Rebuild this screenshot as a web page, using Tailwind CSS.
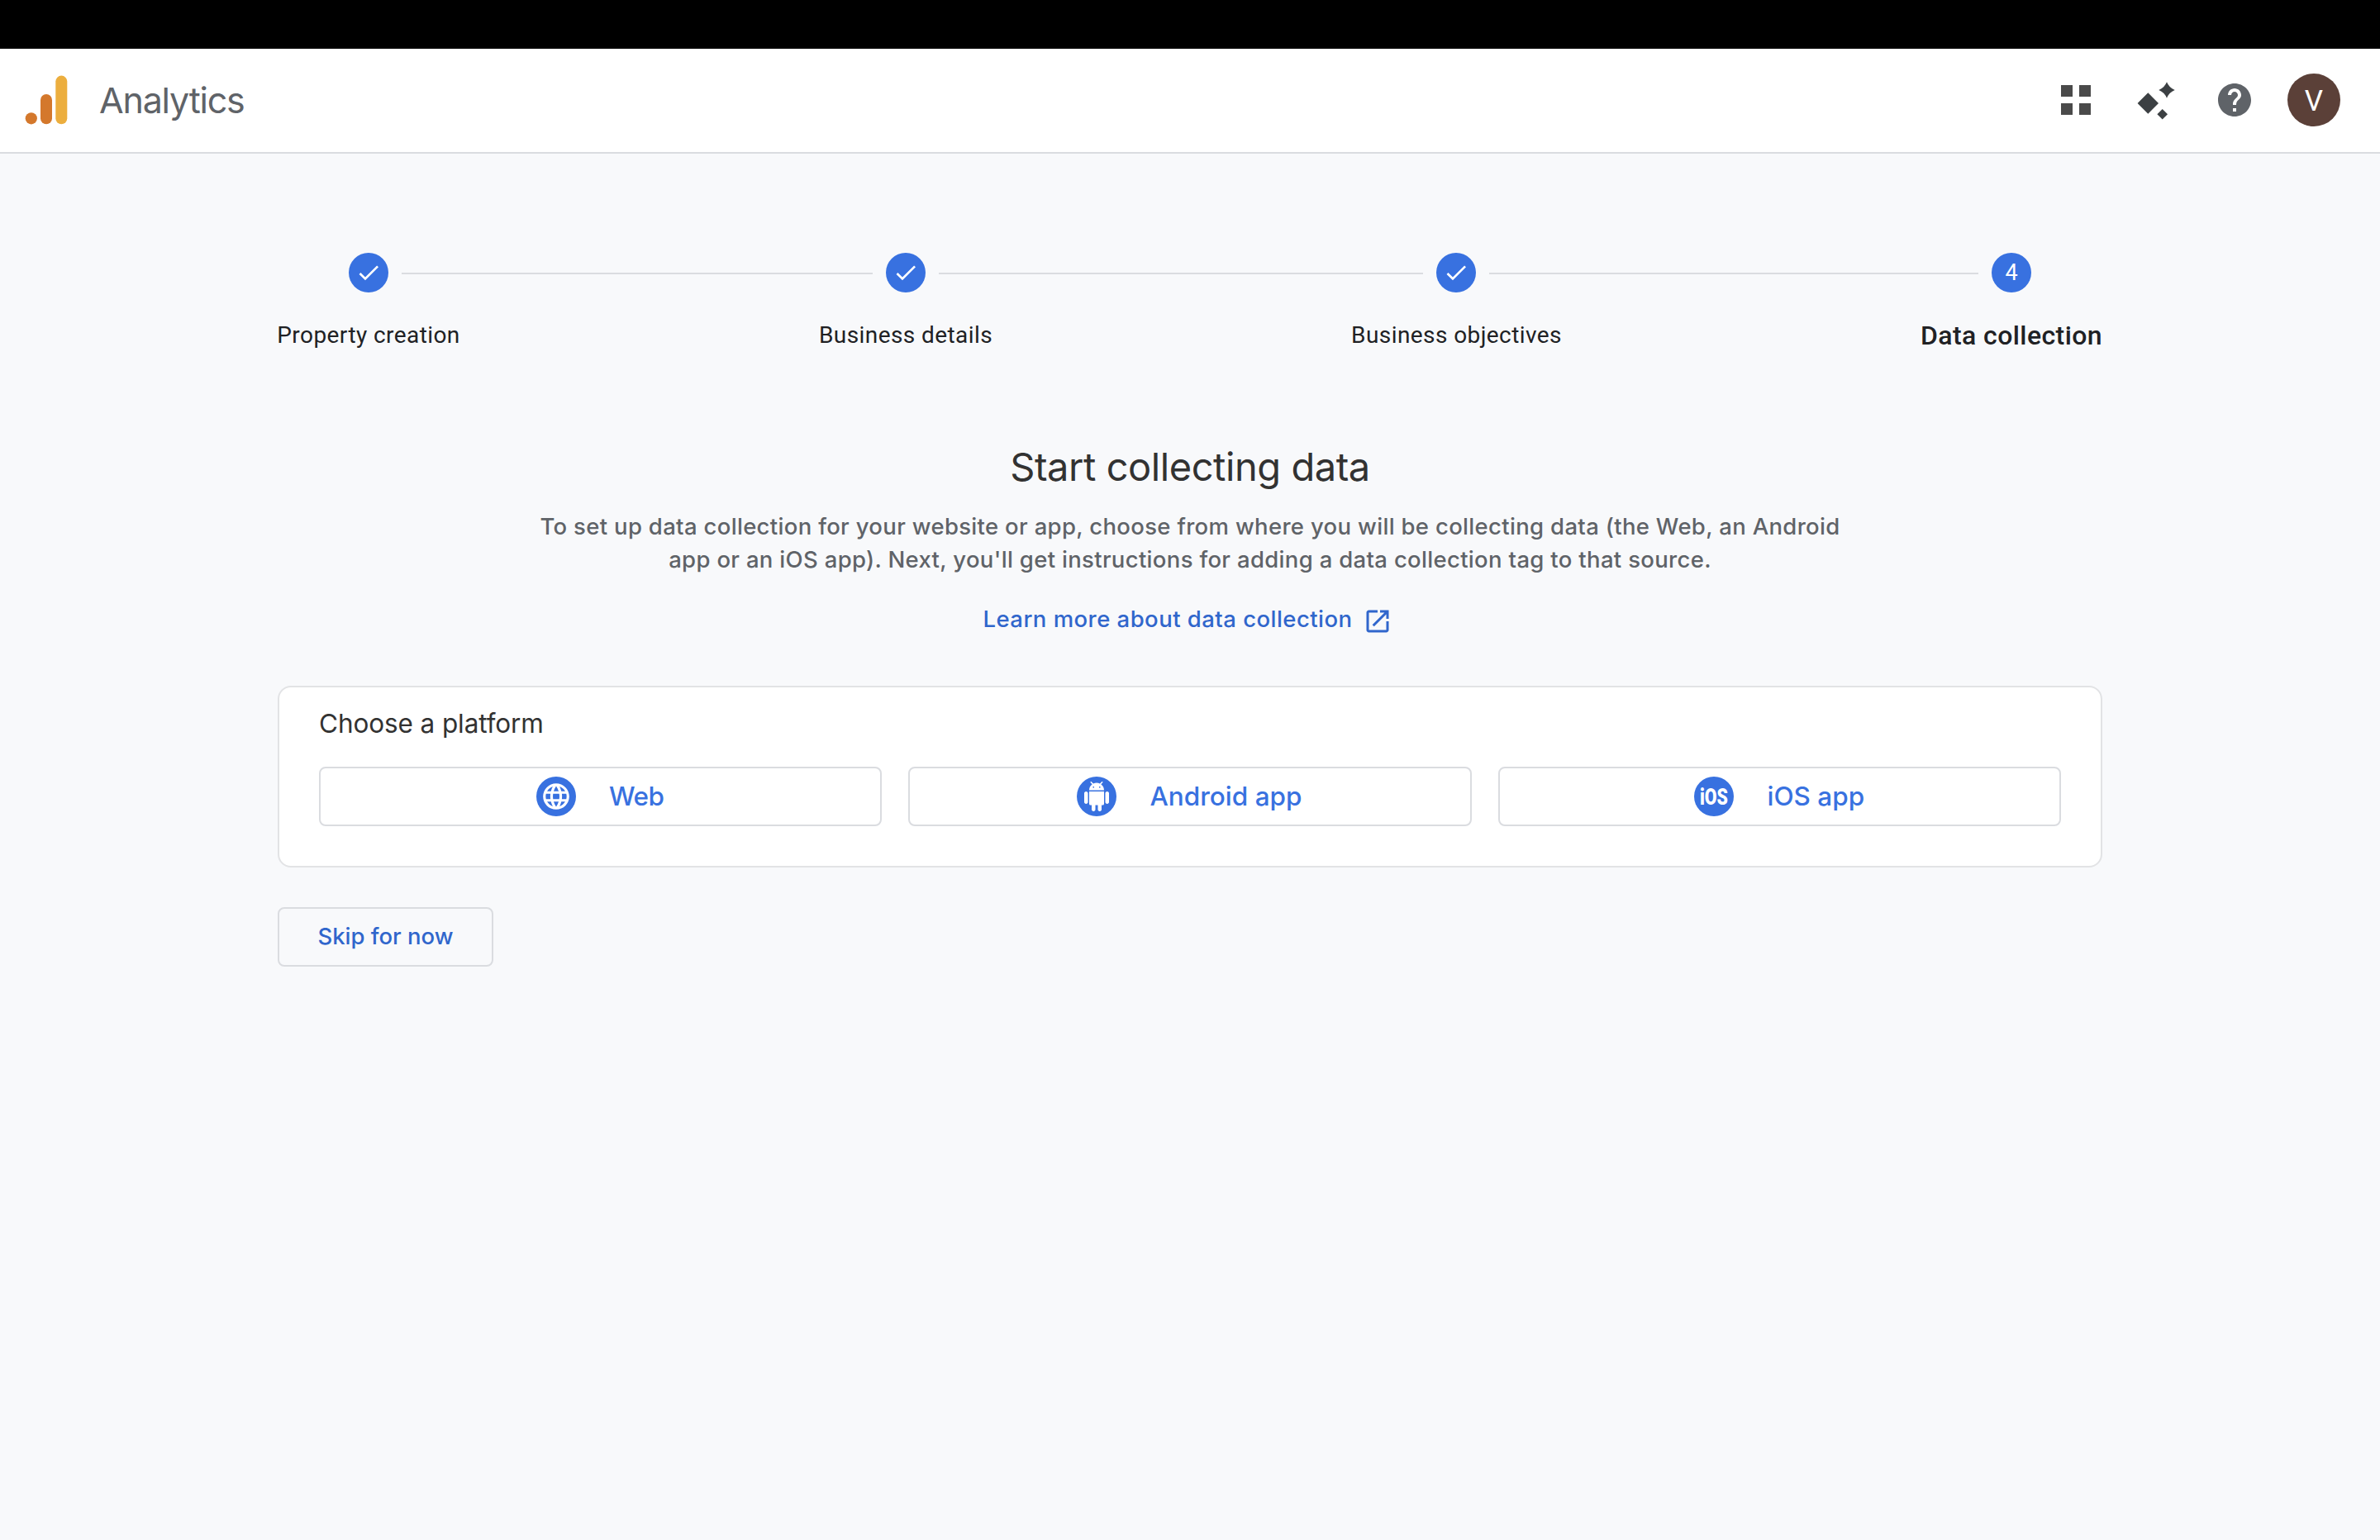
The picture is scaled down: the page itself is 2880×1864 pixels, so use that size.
<!DOCTYPE html>
<html lang="en">

<head>
  <meta charset="UTF-8">
  <meta name="viewport" content="width=device-width, initial-scale=1.0">
  <title>Analytics</title>
  <script src="https://cdn.jsdelivr.net/npm/@tailwindcss/browser@4"></script>
</head>

<body class="min-h-screen bg-[#f8f9fb] font-['Inter',sans-serif] text-[#323232]">

  <div class="h-[59px] bg-black"></div>

  <!-- Header -->
  <header class="h-[127px] pl-[30px] pr-14 pb-px flex items-center justify-between bg-white border-b-2 border-[#dadce0]">
    <div class="flex items-center">
      <svg class="w-[54px] h-[60px]" viewBox="0 0 54 60">
        <circle cx="7.8" cy="52.3" r="7.1" fill="#d4782c" />
        <rect x="19" y="23" width="14" height="36.3" rx="7" fill="#d4782c" />
        <rect x="37.3" y="0.6" width="14" height="58.7" rx="7" fill="#ecae3e" />
      </svg>
      <span class="ml-9 pt-px text-[43px] leading-none tracking-[-1.2px] text-[#5f6368]">Analytics</span>
    </div>

    <div class="flex items-center gap-12">
      <button>
        <svg class="block size-12" viewBox="0 0 48 48" fill="#4a4a4a">
          <path d="M6 6h14v14H6zM28 6h14v14H28zM6 28h14v14H6zM28 28h14v14H28z" />
        </svg>
      </button>
      <button>
        <svg class="block size-12" viewBox="0 0 48 48" fill="#3c4043">
          <path d="M15.3 15.3L28 28 15.3 40.7 2.6 28z" />
          <path d="M32.7 35l6.3 6.3-6.3 6.3-6.3-6.3z" />
          <path d="M38 2.3Q40.8 9.2 47.7 12 40.8 14.8 38 21.7 35.2 14.8 28.3 12 35.2 9.2 38 2.3z" />
        </svg>
      </button>
      <button>
        <svg class="block size-12" viewBox="0 0 24 24" fill="#5f6368">
          <path d="M12 2C6.48 2 2 6.48 2 12s4.48 10 10 10 10-4.48 10-10S17.52 2 12 2zm1 17h-2v-2h2v2zm2.07-7.75l-.9.92C13.45 12.9 13 13.5 13 15h-2v-.5c0-1.1.45-2.1 1.17-2.83l1.24-1.26c.37-.36.59-.86.59-1.41 0-1.1-.9-2-2-2s-2 .9-2 2H8c0-2.21 1.79-4 4-4s4 1.79 4 4c0 .88-.36 1.68-.93 2.25z" />
        </svg>
      </button>
      <button class="size-16 -ml-2 -mr-2 pt-0.5 rounded-full bg-[#5b4038] text-white font-['Roboto',sans-serif] text-[35px] leading-none">V</button>
    </div>
  </header>

  <main class="w-[2208px] mx-auto pt-[120px]">

    <!-- Stepper -->
    <div class="px-[86px] flex items-center gap-4 h-12">
      <span class="size-12 rounded-full bg-[#3871e0] flex items-center justify-center shrink-0">
        <svg class="size-8" viewBox="0 0 24 24" fill="#fff"><path d="M9 16.17L4.83 12l-1.42 1.41L9 19 21 7l-1.41-1.41z" /></svg>
      </span>
      <span class="w-[570px] h-0.5 mt-0.5 bg-[#dadce0]"></span>
      <span class="size-12 rounded-full bg-[#3871e0] flex items-center justify-center shrink-0">
        <svg class="size-8" viewBox="0 0 24 24" fill="#fff"><path d="M9 16.17L4.83 12l-1.42 1.41L9 19 21 7l-1.41-1.41z" /></svg>
      </span>
      <span class="w-[586px] h-0.5 mt-0.5 bg-[#dadce0]"></span>
      <span class="size-12 rounded-full bg-[#3871e0] flex items-center justify-center shrink-0">
        <svg class="size-8" viewBox="0 0 24 24" fill="#fff"><path d="M9 16.17L4.83 12l-1.42 1.41L9 19 21 7l-1.41-1.41z" /></svg>
      </span>
      <span class="w-[592px] h-0.5 mt-0.5 bg-[#dadce0]"></span>
      <span class="size-12 rounded-full bg-[#3871e0] flex items-center justify-center shrink-0 text-white font-['Roboto',sans-serif] text-[27px] leading-none">4</span>
    </div>
    <div class="mt-[31px] h-[42px] flex justify-between font-['Roboto',sans-serif] text-[28px] leading-[42px] tracking-[0.42px] text-[#202124] whitespace-nowrap">
      <div class="w-[220px] flex justify-center">Property creation</div>
      <div class="w-[208px] flex justify-center">Business details</div>
      <div class="w-[252px] pl-px flex justify-center">Business objectives</div>
      <div class="w-[220px] flex justify-center text-[32px] font-medium">Data collection</div>
    </div>

    <!-- Intro -->
    <div class="mt-[110px] text-center">
      <h1 class="text-[47px] leading-[56px] tracking-[-0.45px]">Start collecting data</h1>
      <p class="mt-6 text-[27.5px] leading-10 tracking-[0.32px] font-medium text-[#5f6368]">
        To set up data collection for your website or app, choose from where you will be collecting data (the Web, an Android<br>
        app or an iOS app). Next, you'll get instructions for adding a data collection tag to that source.
      </p>
      <a href="#" class="mt-8 pr-1.5 flex items-center justify-center gap-3 text-[27.5px] leading-10 tracking-[0.46px] font-medium text-[#3066cc]">
        Learn more about data collection
        <svg class="size-9 mt-1 -mb-0.5" viewBox="0 0 24 24" fill="currentColor">
          <path d="M19 19H5V5h7V3H5c-1.11 0-2 .9-2 2v14c0 1.1.89 2 2 2h14c1.1 0 2-.9 2-2v-7h-2v7zM14 3v2h3.59l-9.83 9.83 1.41 1.41L19 6.41V10h2V3h-7z" />
        </svg>
      </a>
    </div>

    <!-- Platform picker -->
    <section class="mt-[61px] h-[220px] px-12 pt-6 bg-white border-2 border-[#e2e3e5] rounded-2xl">
      <h2 class="text-[31.5px] leading-10 tracking-[-0.1px]">Choose a platform</h2>
      <div class="mt-8 grid grid-cols-3 gap-8 text-[31.5px] leading-none font-medium text-[#3871e0]">
        <button class="h-[72px] pr-px border-2 border-[#dadce0] rounded-lg flex items-center justify-center gap-10">
          <span class="size-12 rounded-full bg-[#3871e0] flex items-center justify-center">
            <svg class="size-[38px]" viewBox="0 0 24 24" fill="#fff">
              <path d="M11.99 2C6.47 2 2 6.48 2 12s4.47 10 9.99 10C17.52 22 22 17.52 22 12S17.52 2 11.99 2zm6.93 6h-2.95c-.32-1.25-.78-2.45-1.38-3.56 1.84.63 3.37 1.91 4.33 3.56zM12 4.04c.83 1.2 1.48 2.53 1.91 3.96h-3.82c.43-1.43 1.08-2.76 1.91-3.96zM4.26 14C4.1 13.36 4 12.69 4 12s.1-1.36.26-2h3.38c-.08.66-.14 1.32-.14 2s.06 1.34.14 2H4.26zm.82 2h2.95c.32 1.25.78 2.45 1.38 3.56-1.84-.63-3.37-1.9-4.33-3.56zm2.95-8H5.08c.96-1.66 2.49-2.93 4.33-3.56C8.81 5.55 8.35 6.75 8.03 8zM12 19.96c-.83-1.2-1.48-2.53-1.91-3.96h3.82c-.43 1.43-1.08 2.76-1.91 3.96zM14.34 14H9.66c-.09-.66-.16-1.32-.16-2s.07-1.35.16-2h4.68c.09.65.16 1.32.16 2s-.07 1.34-.16 2zm.25 5.56c.6-1.11 1.06-2.31 1.38-3.56h2.95c-.96 1.65-2.49 2.93-4.33 3.56zM16.36 14c.08-.66.14-1.32.14-2s-.06-1.34-.14-2h3.38c.16.64.26 1.31.26 2s-.1 1.36-.26 2h-3.38z" />
            </svg>
          </span>
          <span class="tracking-[-0.5px]">Web</span>
        </button>
        <button class="h-[72px] pr-px border-2 border-[#dadce0] rounded-lg flex items-center justify-center gap-10">
          <span class="size-12 rounded-full bg-[#3871e0] flex items-center justify-center">
            <svg class="size-9" viewBox="0 0 24 24" fill="#fff">
              <path d="M6 18c0 .55.45 1 1 1h1v3.5c0 .83.67 1.5 1.5 1.5s1.5-.67 1.5-1.5V19h2v3.5c0 .83.67 1.5 1.5 1.5s1.5-.67 1.5-1.5V19h1c.55 0 1-.45 1-1V8H6v10zM3.5 8C2.67 8 2 8.67 2 9.5v7c0 .83.67 1.5 1.5 1.5S5 17.33 5 16.5v-7C5 8.67 4.33 8 3.5 8zm17 0c-.83 0-1.5.67-1.5 1.5v7c0 .83.67 1.5 1.5 1.5s1.5-.67 1.5-1.5v-7c0-.83-.67-1.5-1.5-1.5zm-4.97-5.84l1.3-1.3c.2-.2.2-.51 0-.71-.2-.2-.51-.2-.71 0l-1.48 1.48C13.85 1.23 12.95 1 12 1c-.96 0-1.86.23-2.66.63L7.85.15c-.2-.2-.51-.2-.71 0-.2.2-.2.51 0 .71l1.31 1.31C6.97 3.26 6 5.01 6 7h12c0-1.99-.97-3.75-2.47-4.84zM10 5H9V4h1v1zm5 0h-1V4h1v1z" />
            </svg>
          </span>
          <span>Android app</span>
        </button>
        <button class="h-[72px] border-2 border-[#dadce0] rounded-lg flex items-center justify-center gap-10">
          <span class="size-12 rounded-full bg-[#3871e0] flex items-center justify-center">
            <svg class="size-12 overflow-visible" viewBox="0 0 48 48" fill="#fff">
              <text x="7" y="34" textLength="34" lengthAdjust="spacingAndGlyphs" class="font-['Roboto',sans-serif] font-black text-[28px]">iOS</text>
            </svg>
          </span>
          <span>iOS app</span>
        </button>
      </div>
    </section>

    <button class="mt-12 w-[261px] h-[72px] border-2 border-[#dadce0] rounded-lg text-[27.5px] leading-none font-medium text-[#3066cc]">Skip for now</button>

  </main>

</body>

</html>
